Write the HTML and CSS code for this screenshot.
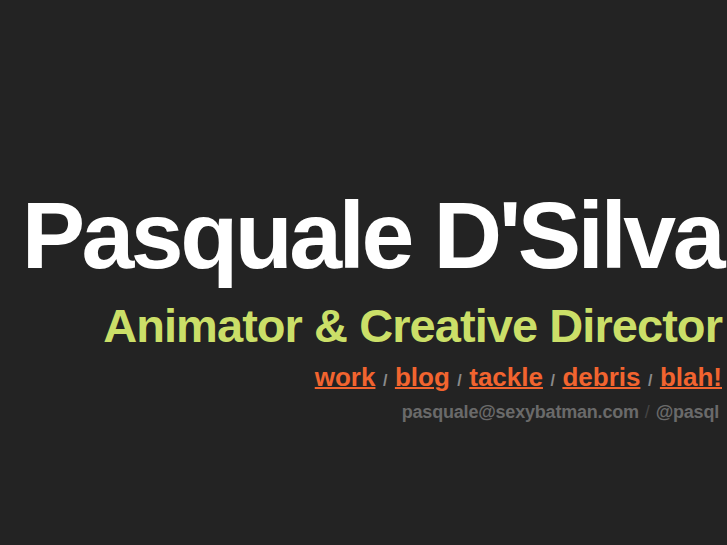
FILE: index.html
```html
<!DOCTYPE html>
<html lang="en">
<head>
<meta charset="utf-8">
<title>Pasquale D'Silva</title>
<link rel="stylesheet" href="styles.css">
</head>
<body>
<main class="page">
  <h1 class="name">Pasquale D'Silva</h1>
  <h2 class="role">Animator &amp; Creative Director</h2>
  <nav class="links">
    <a href="#">work</a><span class="sep">/</span><a href="#">blog</a><span class="sep">/</span><a href="#">tackle</a><span class="sep">/</span><a href="#">debris</a><span class="sep">/</span><a href="#">blah!</a>
  </nav>
  <p class="contact">pasquale@sexybatman.com<span class="sep2">/</span>@pasql</p>
</main>
</body>
</html>
```

FILE: styles.css
```css
html, body {
  margin: 0;
  padding: 0;
  background: #232323;
  height: 100%;
  overflow: hidden;
}
.page {
  display: flex;
  flex-direction: column;
  align-items: flex-end;
  padding: 188px 5px 0 0;
  font-family: "Liberation Sans", Arial, Helvetica, sans-serif;
  font-weight: bold;
  white-space: nowrap;
}
.name {
  margin: 0;
  font-size: 95px;
  line-height: 95px;
  letter-spacing: -0.037em;
  color: #ffffff;
  font-weight: bold;
}
.role {
  margin: 19px 0 0;
  font-size: 47px;
  line-height: 47px;
  letter-spacing: -0.02em;
  color: #cbdf68;
  font-weight: bold;
}
.links {
  margin-top: 15px;
  font-size: 26px;
  line-height: 26px;
}
.links a {
  color: #f2642f;
  text-decoration: underline;
  text-decoration-thickness: 2px;
  text-underline-offset: 1px;
}
.sep {
  display: inline-block;
  font-size: 16px;
  color: #8a8a8a;
  margin: 0 7.5px;
}
.contact {
  margin: 9px 3px 0 0;
  font-size: 18px;
  line-height: 18px;
  letter-spacing: -0.2px;
  color: #6a6a6a;
}
.sep2 {
  color: #444444;
  margin: 0 6px;
  font-weight: normal;
}
```
